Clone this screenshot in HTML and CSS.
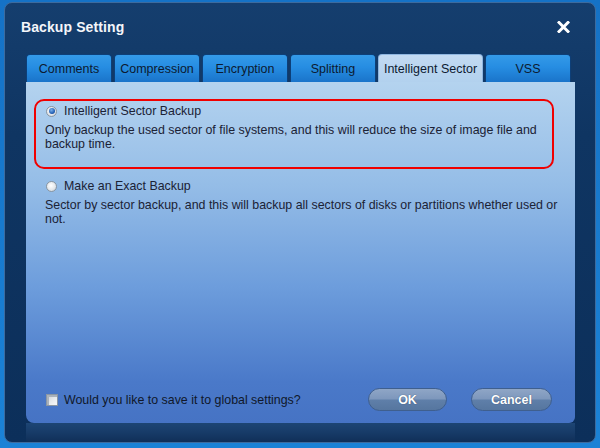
FILE: index.html
```html
<!DOCTYPE html>
<html>
<head>
<meta charset="utf-8">
<link rel="stylesheet" href="styles.css">
</head>
<body>
<div class="window">
  <div class="titlebar">
    <span class="title">Backup Setting</span>
    <svg class="close" width="13" height="12" viewBox="0 0 13 12"><path d="M2 1.5 L11 10.5 M11 1.5 L2 10.5" stroke="#fff" stroke-width="3" stroke-linecap="square"/></svg>
  </div>
  <div class="tabs">
    <div class="tab w86">Comments</div>
    <div class="tab w86">Compression</div>
    <div class="tab w86">Encryption</div>
    <div class="tab w86">Splitting</div>
    <div class="tab active w105">Intelligent Sector</div>
    <div class="tab w86">VSS</div>
  </div>
  <div class="panel">
    <div class="option highlight">
      <div class="radio-row"><span class="radio checked"></span><span>Intelligent Sector Backup</span></div>
      <p class="desc">Only backup the used sector of file systems, and this will reduce the size of image file and backup time.</p>
    </div>
    <div class="option second">
      <div class="radio-row"><span class="radio"></span><span>Make an Exact Backup</span></div>
      <p class="desc wide">Sector by sector backup, and this will backup all sectors of disks or partitions whether used or not.</p>
    </div>
    <div class="panel-footer">
      <div class="check-row"><span class="checkbox"></span><span>Would you like to save it to global settings?</span></div>
      <div class="buttons">
        <button class="btn ok">OK</button>
        <button class="btn cancel">Cancel</button>
      </div>
    </div>
  </div>
  <div class="footer-band"></div>
</div>
</body>
</html>
```
FILE: styles.css
```css
html, body {
  margin: 0;
  padding: 0;
}
body {
  width: 600px;
  height: 448px;
  overflow: hidden;
  background: linear-gradient(180deg, #1572c6 0%, #1b82d6 100%);
  padding: 2px 0 0 4px;
  box-sizing: border-box;
  font-family: "Liberation Sans", Arial, sans-serif;
}
.window {
  width: 592px;
  height: 441px;
  box-sizing: border-box;
  border: 1px solid #3d6b9e;
  border-radius: 8px;
  background: linear-gradient(180deg, #153e6e 0%, #0f3562 30%, #0c2f5a 100%);
  display: flex;
  flex-direction: column;
  overflow: hidden;
}
.titlebar {
  height: 51px;
  box-sizing: border-box;
  padding: 0 25px 3px 16px;
  display: flex;
  align-items: center;
  justify-content: space-between;
}
.title {
  color: #f4f6fa;
  font-weight: bold;
  font-size: 14px;
  letter-spacing: 0.1px;
}
.close {
  display: block;
}
.tabs {
  margin-left: 21px;
  height: 28px;
  display: flex;
  gap: 2px;
}
.tab {
  box-sizing: border-box;
  height: 28px;
  border: 1px solid #0d3f78;
  border-bottom: none;
  border-radius: 4px 4px 0 0;
  background: linear-gradient(180deg, #349ae8 0%, #268de2 45%, #1a74ca 100%);
  color: #0c1a30;
  font-size: 12.5px;
  display: flex;
  align-items: center;
  justify-content: center;
  padding-top: 1px;
}
.tab.active {
  background: linear-gradient(180deg, #c3daf2 0%, #b2d1ee 100%);
  border-color: #8fb6e0;
}
.w86 { width: 86px; }
.w105 { width: 105px; }
.panel {
  margin-left: 21px;
  width: 549px;
  height: 341px;
  box-sizing: border-box;
  border-radius: 0 0 6px 8px;
  background: linear-gradient(180deg, #b4d3ef 0%, #95bde7 30%, #6d9ddc 60%, #4a79c9 88%, #4673c4 100%);
  padding: 17px 0 12px 8px;
  display: flex;
  flex-direction: column;
  color: #1b2235;
  font-size: 12.4px;
}
.option {
  width: 520px;
  box-sizing: border-box;
  border: 2px solid transparent;
  border-radius: 10px;
  padding: 3px 0 16px 9px;
}
.option.highlight {
  border-color: #f00000;
}
.option.second {
  margin-top: 5px;
  padding-bottom: 0;
}
.radio-row {
  display: flex;
  align-items: center;
  height: 14px;
  gap: 7px;
  padding-left: 1px;
}
.radio {
  width: 11px;
  height: 11px;
  box-sizing: border-box;
  border-radius: 50%;
  border: 1px solid #8a96a2;
  background: radial-gradient(circle at 45% 40%, #ffffff 0%, #e2e6ea 60%, #b8c0c8 100%);
  position: relative;
}
.radio.checked::after {
  content: "";
  position: absolute;
  left: 1.5px;
  top: 1.5px;
  width: 6px;
  height: 6px;
  border-radius: 50%;
  background: radial-gradient(circle at 40% 35%, #7ab0ec 0%, #1e5bb0 65%, #123e80 100%);
}
.desc {
  margin: 6px 0 0 0;
  line-height: 13.5px;
  width: 505px;
}
.desc.wide {
  width: 514px;
}
.panel-footer {
  margin-top: auto;
  display: flex;
  align-items: center;
  justify-content: space-between;
  padding: 0 23px 0 12px;
}
.check-row {
  display: flex;
  align-items: center;
  gap: 6px;
  color: #10182a;
}
.checkbox {
  width: 12px;
  height: 12px;
  box-sizing: border-box;
  border: 1px solid #8a96a4;
  background: linear-gradient(135deg, #c9ced4 0%, #e6e9ec 50%, #f6f7f8 100%);
  box-shadow: inset 2px 2px 0 #aab2bb;
}
.buttons {
  display: flex;
  gap: 24px;
}
.btn {
  height: 23px;
  box-sizing: border-box;
  border: 1px solid #3f5f8e;
  border-radius: 12px;
  background: linear-gradient(180deg, #8fa6c6 0%, #7d97bc 48%, #5f7fa9 52%, #56769f 100%);
  color: #ffffff;
  font-family: "Liberation Sans", Arial, sans-serif;
  font-weight: bold;
  font-size: 12.5px;
  text-shadow: 0 0 1px #2a4266;
  padding: 0;
}
.btn.ok { width: 79px; }
.btn.cancel { width: 81px; }
.footer-band {
  height: 19px;
  margin-left: 21px;
  margin-right: 20px;
  background: linear-gradient(180deg, #1d4574 0%, #173b68 50%, #102f58 100%);
}
```
